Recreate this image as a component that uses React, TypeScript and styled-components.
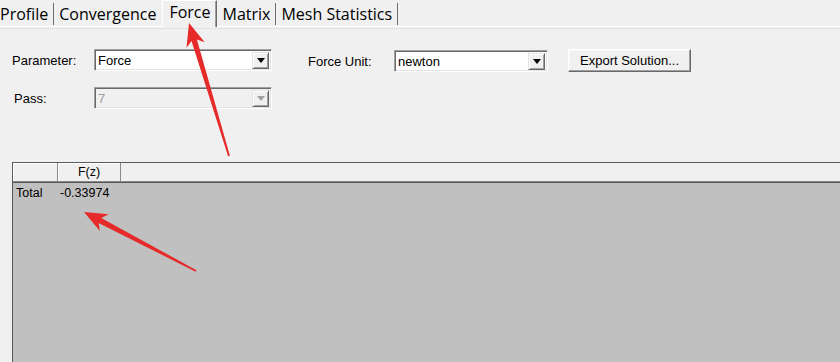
import React from "react";
import styled, { createGlobalStyle } from "styled-components";

const Global = createGlobalStyle`
  html, body { margin: 0; padding: 0; background: #f0f0f0; }
  body { width: 840px; height: 362px; overflow: hidden; }
`;

const Page = styled.div`
  position: relative;
  width: 840px;
  height: 362px;
  display: flex;
  flex-direction: column;
  background: #f0f0f0;
  font-family: "Liberation Sans", Arial, sans-serif;
  font-size: 13px;
  color: #000;
  overflow: hidden;
`;

const TabBar = styled.div`
  display: flex;
  align-items: flex-end;
  height: 26px;
  border-bottom: 1px solid #ffffff;
  font-family: "Open Sans", "Noto Sans", sans-serif;
  font-size: 16px;
`;

const Tab = styled.div<{ $first?: boolean; $noSep?: boolean }>`
  box-sizing: border-box;
  height: 22px;
  margin-bottom: 1px;
  display: flex;
  align-items: center;
  padding: 0 5px 0 ${(p) => (p.$first ? 0 : 5)}px;
  border-right: 1px solid ${(p) => (p.$noSep ? "transparent" : "#6d6d6d")};
  white-space: nowrap;
`;

const ActiveTab = styled.div`
  box-sizing: border-box;
  height: 27px;
  margin-bottom: -1px;
  display: flex;
  align-items: center;
  padding: 0 6px 4px 6px;
  background: #f0f0f0;
  border-left: 1px solid #ffffff;
  border-top: 1px solid #ffffff;
  border-right: 1px solid #6d6d6d;
  box-shadow: inset -1px 0 0 #a0a0a0;
  white-space: nowrap;
  position: relative;
  z-index: 1;
`;

const Rule = styled.div`
  height: 1px;
  margin-top: 1px;
  background: #e2e2e2;
`;

const FormArea = styled.div`
  display: flex;
  align-items: flex-start;
  margin: 20px 0 0 12px;
`;

const LeftGrid = styled.div`
  display: grid;
  grid-template-columns: 82px 178px;
  grid-auto-rows: 22px;
  row-gap: 16px;
  align-items: center;
`;

const Label = styled.span<{ $indent?: number }>`
  padding-left: ${(p) => p.$indent ?? 0}px;
  white-space: nowrap;
`;

const RightGroup = styled.div`
  display: flex;
  align-items: center;
  margin-left: 36px;
  padding-top: 1px;
`;

const UnitLabel = styled.span`
  width: 86px;
  white-space: nowrap;
`;

const Combo = styled.div<{ $width: number; $disabled?: boolean }>`
  box-sizing: border-box;
  width: ${(p) => p.$width}px;
  height: 22px;
  display: flex;
  align-items: center;
  background: ${(p) => (p.$disabled ? "#f0f0f0" : "#ffffff")};
  color: ${(p) => (p.$disabled ? "#a0a0a0" : "#000000")};
  border-style: solid;
  border-width: 1px;
  border-color: #a0a0a0 #ffffff #ffffff #a0a0a0;
  box-shadow: inset 1px 1px 0 #696969, inset -1px -1px 0 #e3e3e3;
  padding: 0 2px 0 3px;
`;

const ComboText = styled.span`
  flex: 1;
  font-size: 13px;
  white-space: nowrap;
  overflow: hidden;
`;

const DropButton = styled.div`
  box-sizing: border-box;
  width: 17px;
  height: 17px;
  background: #f0f0f0;
  border-style: solid;
  border-width: 1px;
  border-color: #e3e3e3 #696969 #696969 #e3e3e3;
  box-shadow: inset 1px 1px 0 #ffffff, inset -1px -1px 0 #a0a0a0;
  display: flex;
  align-items: center;
  justify-content: center;
`;

const DropArrow = styled.span<{ $disabled?: boolean }>`
  width: 0;
  height: 0;
  margin-top: 1px;
  border-left: 4px solid transparent;
  border-right: 4px solid transparent;
  border-top: 5px solid ${(p) => (p.$disabled ? "#a0a0a0" : "#000000")};
`;

const PushButton = styled.button`
  box-sizing: border-box;
  width: 123px;
  height: 23px;
  margin: -1px 0 0 20px;
  padding: 0;
  background: #f0f0f0;
  color: #000;
  font-family: "Liberation Sans", Arial, sans-serif;
  font-size: 13px;
  border-style: solid;
  border-width: 1px;
  border-color: #ffffff #696969 #696969 #ffffff;
  box-shadow: inset -1px -1px 0 #a0a0a0, inset 1px 1px 0 #f8f8f8;
`;

const Table = styled.div`
  flex: 1;
  display: flex;
  flex-direction: column;
  margin: 53px 0 0 12px;
  border-top: 1px solid #5a5a5a;
  border-left: 1px solid #5a5a5a;
  font-size: 12.5px;
`;

const HeaderRow = styled.div`
  display: flex;
  height: 18px;
  background: #f0f0f0;
  border-bottom: 1px solid #8a8a8a;
`;

const HeaderCell = styled.div<{ $width: number }>`
  box-sizing: border-box;
  width: ${(p) => p.$width}px;
  height: 100%;
  display: flex;
  align-items: center;
  justify-content: center;
  border-right: 1px solid #8a8a8a;
  box-shadow: inset 1px 1px 0 #ffffff;
`;

const Body = styled.div`
  flex: 1;
  background: #c0c0c0;
  border-top: 1px solid #555555;
`;

const Row = styled.div`
  display: flex;
  align-items: center;
  height: 20px;
`;

const Cell = styled.div<{ $width: number; $pad: number }>`
  box-sizing: border-box;
  width: ${(p) => p.$width}px;
  padding-left: ${(p) => p.$pad}px;
  white-space: nowrap;
`;

const Overlay = styled.svg`
  position: absolute;
  left: 0;
  top: 0;
  pointer-events: none;
  z-index: 5;
`;

type Pt = [number, number];

function arrowPoints(tip: Pt, tail: Pt): string {
  const dx = tip[0] - tail[0];
  const dy = tip[1] - tail[1];
  const len = Math.hypot(dx, dy);
  const ux = dx / len;
  const uy = dy / len;
  const nx = -uy;
  const ny = ux;
  const at = (d: number, w: number): Pt => [
    tip[0] - ux * d + nx * w,
    tip[1] - uy * d + ny * w,
  ];
  const pts: Pt[] = [
    tip,
    at(23, 9.5),
    at(18, 2.8),
    [tail[0] + nx * 0.9, tail[1] + ny * 0.9],
    [tail[0] - nx * 0.9, tail[1] - ny * 0.9],
    at(18, -2.8),
    at(23, -9.5),
  ];
  return pts.map((p) => `${p[0].toFixed(1)},${p[1].toFixed(1)}`).join(" ");
}

const Combobox: React.FC<{ width: number; value: string; disabled?: boolean }> = ({
  width,
  value,
  disabled,
}) => (
  <Combo $width={width} $disabled={disabled}>
    <ComboText>{value}</ComboText>
    <DropButton>
      <DropArrow $disabled={disabled} />
    </DropButton>
  </Combo>
);

export default function App() {
  return (
    <Page>
      <Global />
      <TabBar>
        <Tab $first>Profile</Tab>
        <Tab $noSep>Convergence</Tab>
        <ActiveTab>Force</ActiveTab>
        <Tab>Matrix</Tab>
        <Tab>Mesh Statistics</Tab>
      </TabBar>
      <Rule />
      <FormArea>
        <LeftGrid>
          <Label>Parameter:</Label>
          <Combobox width={178} value="Force" />
          <Label $indent={2}>Pass:</Label>
          <Combobox width={178} value="7" disabled />
        </LeftGrid>
        <RightGroup>
          <UnitLabel>Force Unit:</UnitLabel>
          <Combobox width={154} value="newton" />
          <PushButton>Export Solution...</PushButton>
        </RightGroup>
      </FormArea>
      <Table>
        <HeaderRow>
          <HeaderCell $width={45} />
          <HeaderCell $width={63}>F(z)</HeaderCell>
        </HeaderRow>
        <Body>
          <Row>
            <Cell $width={45} $pad={3}>Total</Cell>
            <Cell $width={63} $pad={2}>-0.33974</Cell>
          </Row>
        </Body>
      </Table>
      <Overlay width={840} height={362} viewBox="0 0 840 362">
        <polygon points={arrowPoints([189, 23], [229, 156])} fill="#e62a2a" />
        <polygon points={arrowPoints([84, 212], [196, 271])} fill="#e62a2a" />
      </Overlay>
    </Page>
  );
}
